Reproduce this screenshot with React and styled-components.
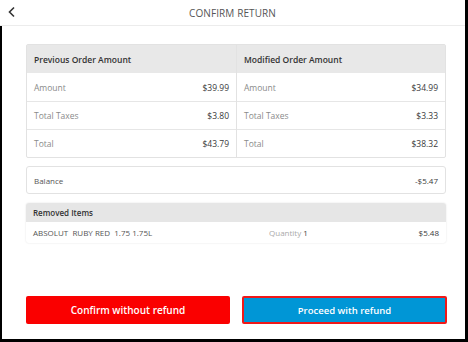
import React from "react";
import styled, { createGlobalStyle } from "styled-components";

const Global = createGlobalStyle`
  html, body {
    margin: 0;
    padding: 0;
    background: #000;
  }
  body {
    font-family: "Open Sans", "Noto Sans", sans-serif;
  }
`;

const Screen = styled.div`
  width: 468px;
  height: 342px;
  display: flex;
  flex-direction: column;
  background: #000;
`;

const Header = styled.div`
  width: 465px;
  height: 25px;
  background: #fff;
  border-bottom: 1px solid #ececec;
  display: flex;
  align-items: center;
  justify-content: center;
  position: relative;
  font-size: 10px;
  color: #555;
  letter-spacing: 0.1px;
`;

const Back = styled.svg`
  position: absolute;
  left: 7px;
  top: 6px;
`;

const Main = styled.div`
  margin-left: 2px;
  width: 463px;
  height: 313px;
  box-sizing: border-box;
  background: #fff;
  padding: 18px 19px 15px 24px;
  display: flex;
  flex-direction: column;
`;

const Table = styled.div`
  display: grid;
  grid-template-columns: 1fr 1fr;
  border: 1px solid #e2e2e2;
  border-radius: 2px;
  width: 420px;
  box-sizing: border-box;
`;

const Column = styled.div`
  display: flex;
  flex-direction: column;
  border-left: ${(p) => (p.$second ? "1px solid #e2e2e2" : "none")};
`;

const HeadCell = styled.div`
  height: 28px;
  background: #e8e8e8;
  display: flex;
  align-items: center;
  padding: 0 7px;
  font-size: 8.5px;
  font-weight: 600;
  color: #333;
`;

const Row = styled.div`
  height: 28px;
  display: flex;
  align-items: center;
  justify-content: space-between;
  padding: 0 7px;
  font-size: 8.5px;
  border-top: ${(p) => (p.$first ? "none" : "1px solid #e6e6e6")};
  box-sizing: border-box;
`;

const Label = styled.span`
  color: #8a8a8a;
`;

const Value = styled.span`
  color: #3a3a3a;
`;

const BalanceBox = styled.div`
  margin-top: 8px;
  width: 420px;
  height: 28px;
  box-sizing: border-box;
  border: 1px solid #e2e2e2;
  border-radius: 3px;
  display: flex;
  align-items: center;
  justify-content: space-between;
  padding: 0 7px;
  font-size: 8px;
  color: #555;
`;

const Removed = styled.div`
  margin-top: 9px;
  width: 420px;
  border-radius: 3px;
  box-shadow: 0 0 2px rgba(0, 0, 0, 0.12);
  overflow: hidden;
`;

const RemovedHead = styled.div`
  height: 19px;
  background: #e6e6e6;
  display: flex;
  align-items: center;
  padding: 0 7px;
  font-size: 8px;
  font-weight: 600;
  color: #333;
`;

const ItemRow = styled.div`
  height: 21px;
  display: grid;
  grid-template-columns: 236px 1fr auto;
  align-items: center;
  padding: 0 7px;
  font-size: 8px;
  color: #555;
  white-space: pre;
`;

const Qty = styled.span`
  color: #aaa;
  b {
    color: #444;
    font-weight: 400;
  }
`;

const Buttons = styled.div`
  margin-top: auto;
  display: grid;
  grid-template-columns: 204px 205px;
  column-gap: 12px;
`;

const Button = styled.button`
  height: 28px;
  border-radius: 2px;
  font-family: inherit;
  font-size: ${(p) => (p.$primary ? "9.5px" : "10px")};
  font-weight: 600;
  color: #fff;
  background: ${(p) => (p.$primary ? "#0096d6" : "#fa0000")};
  border: ${(p) => (p.$primary ? "2px solid #f01818" : "none")};
  padding: 0;
`;

const prev = [
  ["Amount", "$39.99"],
  ["Total Taxes", "$3.80"],
  ["Total", "$43.79"],
];

const mod = [
  ["Amount", "$34.99"],
  ["Total Taxes", "$3.33"],
  ["Total", "$38.32"],
];

const AmountColumn = ({ title, rows, second }) => (
  <Column $second={second}>
    <HeadCell>{title}</HeadCell>
    {rows.map(([l, v], i) => (
      <Row key={l} $first={i === 0}>
        <Label>{l}</Label>
        <Value>{v}</Value>
      </Row>
    ))}
  </Column>
);

export default function App() {
  return (
    <Screen>
      <Global />
      <Header>
        <Back width="10" height="12" viewBox="0 0 10 12">
          <path d="M7 1.5 L2.5 6 L7 10.5" fill="none" stroke="#333" strokeWidth="1.6" />
        </Back>
        CONFIRM RETURN
      </Header>
      <Main>
        <Table>
          <AmountColumn title="Previous Order Amount" rows={prev} />
          <AmountColumn title="Modified Order Amount" rows={mod} second />
        </Table>
        <BalanceBox>
          <span>Balance</span>
          <Value>-$5.47</Value>
        </BalanceBox>
        <Removed>
          <RemovedHead>Removed Items</RemovedHead>
          <ItemRow>
            <span>ABSOLUT  RUBY RED  1.75 1.75L</span>
            <Qty>
              Quantity <b>1</b>
            </Qty>
            <Value>$5.48</Value>
          </ItemRow>
        </Removed>
        <Buttons>
          <Button>Confirm without refund</Button>
          <Button $primary>Proceed with refund</Button>
        </Buttons>
      </Main>
    </Screen>
  );
}
